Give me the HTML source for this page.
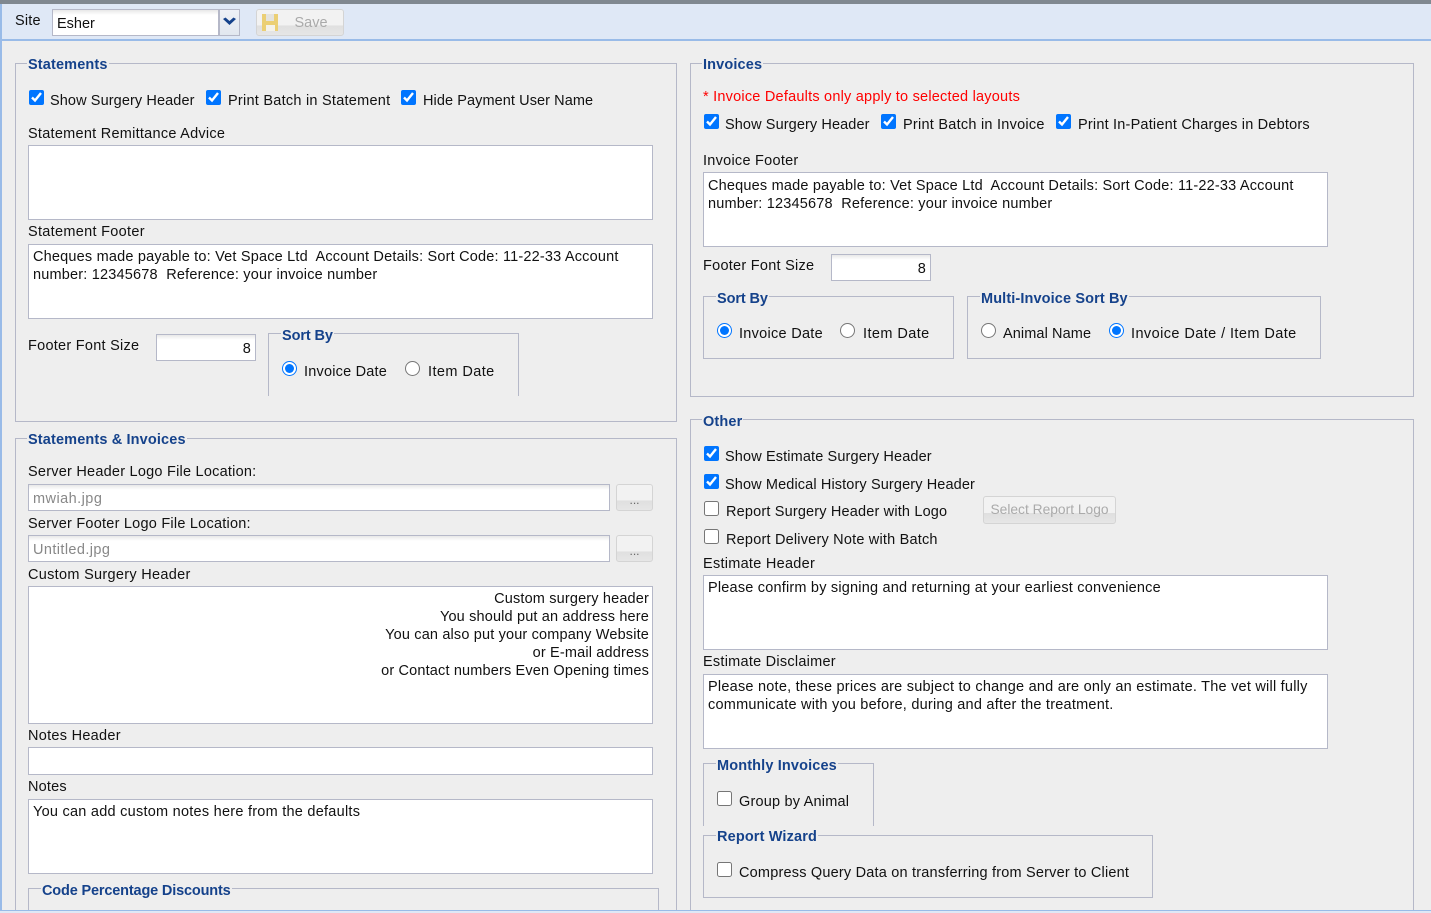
<!DOCTYPE html>
<html><head><meta charset="utf-8"><style>
html,body{margin:0;padding:0;width:1431px;height:913px;overflow:hidden;background:#eee}
#w{position:relative;width:1431px;height:913px;overflow:hidden;background:#eee;font-family:"Liberation Sans",sans-serif;font-size:14.5px;color:#111}
.a,.t,.l,.box,.ta,input,.btn{position:absolute;box-sizing:border-box}
.t{white-space:nowrap;line-height:18px;margin-top:1px;letter-spacing:.2px}
.l{white-space:nowrap;line-height:18px;margin-top:1px;font-weight:bold;color:#15428b;background:#eee;padding:0 1px;font-size:14.5px;letter-spacing:.14px}
.box{border:1px solid #b5b8c8}
.ta{background:#fff;border:1px solid #b5b8c8;padding:3px 4px 2px;line-height:18px;font-size:14.5px;overflow:hidden;letter-spacing:.23px}
.f{background:linear-gradient(#e8e8e8,#fff 5px,#fff)}
input[type=checkbox],input[type=radio]{margin:0;width:15px;height:15px}
.btn{border:1px solid #d4d4d4;border-radius:3px;background:linear-gradient(#f2f2f2,#f2f2f2 62%,#dfdfdf 62%,#e6e6e6);color:#aaa;text-align:center}
</style></head><body><div id="w">
<div class="a" style="left:0;top:0;width:1431px;height:4px;background:#808890"></div>
<div class="a" style="left:0;top:4px;width:1431px;height:37px;background:#dfe8f6;border-bottom:2px solid #99bbe8"></div>
<div class="a" style="left:0;top:4px;width:2px;height:909px;background:#99bbe8"></div>
<div class="t" style="left:15px;top:11px">Site</div>
<div class="a f" style="left:52px;top:9px;width:167px;height:27px;border:1px solid #b5b8c8;padding:5px 4px;line-height:18px;letter-spacing:0">Esher</div>
<div class="a" style="left:219px;top:9px;width:21px;height:27px;background:linear-gradient(#eef1f6,#e2e7ef);border:1px solid #b5b8c8;border-left:1px solid #b5b8c8"><svg width="19" height="25" style="display:block"><path d="M3 9l2.500-1.500L9.500 11 13.500 7.500 16 9l-6.500 6z" fill="#15428b"/></svg></div>
<div class="btn" style="left:256px;top:9px;width:88px;height:27px;line-height:27px;padding-left:22px">Save<svg width="18" height="18" style="position:absolute;left:4px;top:3px"><path d="M1 1h16v17H1z" fill="#ebcf74"/><path d="M5 1h8v7H5z" fill="#e4e3de"/><path d="M5 12h9v6H5z" fill="#f4f2ea"/></svg></div>

<div class="box" style="left:15px;top:63px;width:662px;height:359px"></div>
<div class="l" style="left:27px;top:55px">Statements</div>
<input type="checkbox" checked style="left:29px;top:90px"><div class="t" style="left:50px;top:91px;letter-spacing:.1px">Show Surgery Header</div>
<input type="checkbox" checked style="left:206px;top:90px"><div class="t" style="left:228px;top:91px;letter-spacing:.25px">Print Batch in Statement</div>
<input type="checkbox" checked style="left:401px;top:90px"><div class="t" style="left:423px;top:91px;letter-spacing:.08px">Hide Payment User Name</div>
<div class="t" style="left:28px;top:124px;letter-spacing:.26px">Statement Remittance Advice</div>
<div class="ta" style="left:28px;top:145px;width:625px;height:75px"></div>
<div class="t" style="left:28px;top:222px;letter-spacing:.3px">Statement Footer</div>
<div class="ta" style="left:28px;top:244px;width:625px;height:75px;letter-spacing:.19px">Cheques made payable to: Vet Space Ltd&nbsp; Account Details: Sort Code: 11-22-33 Account number: 12345678&nbsp; Reference: your invoice number</div>
<div class="t" style="left:28px;top:336px;letter-spacing:.26px">Footer Font Size</div>
<div class="ta f" style="left:156px;top:334px;width:100px;height:27px;text-align:right;padding-top:5px">8</div>
<div class="a" style="left:268px;top:333px;width:251px;height:63px;border:1px solid #b5b8c8;border-bottom:0"></div>
<div class="l" style="left:281px;top:326px;letter-spacing:-.1px">Sort By</div>
<input type="radio" checked style="left:282px;top:361px"><div class="t" style="left:304px;top:362px">Invoice Date</div>
<input type="radio" style="left:405px;top:361px"><div class="t" style="left:428px;top:362px;letter-spacing:.42px">Item Date</div>

<div class="box" style="left:15px;top:438px;width:662px;height:490px"></div>
<div class="l" style="left:27px;top:430px">Statements &amp; Invoices</div>
<div class="t" style="left:28px;top:462px;letter-spacing:.23px">Server Header Logo File Location:</div>
<div class="ta f" style="left:28px;top:484px;width:582px;height:27px;color:#888;padding-top:5px;letter-spacing:.45px">mwiah.jpg</div>
<div class="btn" style="left:616px;top:484px;width:37px;height:27px;line-height:30px;color:#666;font-size:12px">...</div>
<div class="t" style="left:28px;top:514px;letter-spacing:.23px">Server Footer Logo File Location:</div>
<div class="ta f" style="left:28px;top:535px;width:582px;height:27px;color:#888;padding-top:5px;letter-spacing:.4px">Untitled.jpg</div>
<div class="btn" style="left:616px;top:535px;width:37px;height:27px;line-height:30px;color:#666;font-size:12px">...</div>
<div class="t" style="left:28px;top:565px;letter-spacing:.3px">Custom Surgery Header</div>
<div class="ta" style="left:28px;top:586px;width:625px;height:138px;text-align:right;padding:3px 3px 2px 4px;letter-spacing:.16px">Custom surgery header<br>You should put an address here<br>You can also put your company Website<br>or E-mail address<br>or Contact numbers Even Opening times</div>
<div class="t" style="left:28px;top:726px;letter-spacing:.28px">Notes Header</div>
<div class="ta" style="left:28px;top:747px;width:625px;height:28px"></div>
<div class="t" style="left:28px;top:777px">Notes</div>
<div class="ta" style="left:28px;top:799px;width:625px;height:75px;letter-spacing:.25px">You can add custom notes here from the defaults</div>
<div class="box" style="left:28px;top:888px;width:631px;height:40px"></div>
<div class="l" style="left:41px;top:881px;letter-spacing:-.16px">Code Percentage Discounts</div>

<div class="box" style="left:690px;top:63px;width:724px;height:334px"></div>
<div class="l" style="left:702px;top:55px">Invoices</div>
<div class="t" style="left:703px;top:87px;color:#f00;letter-spacing:.22px">* Invoice Defaults only apply to selected layouts</div>
<input type="checkbox" checked style="left:704px;top:114px"><div class="t" style="left:725px;top:115px;letter-spacing:.1px">Show Surgery Header</div>
<input type="checkbox" checked style="left:881px;top:114px"><div class="t" style="left:903px;top:115px;letter-spacing:.25px">Print Batch in Invoice</div>
<input type="checkbox" checked style="left:1056px;top:114px"><div class="t" style="left:1078px;top:115px">Print In-Patient Charges in Debtors</div>
<div class="t" style="left:703px;top:151px;letter-spacing:.26px">Invoice Footer</div>
<div class="ta" style="left:703px;top:172px;width:625px;height:75px;padding-top:4px;letter-spacing:.19px">Cheques made payable to: Vet Space Ltd&nbsp; Account Details: Sort Code: 11-22-33 Account number: 12345678&nbsp; Reference: your invoice number</div>
<div class="t" style="left:703px;top:256px;letter-spacing:.26px">Footer Font Size</div>
<div class="ta f" style="left:831px;top:254px;width:100px;height:27px;text-align:right;padding-top:5px">8</div>
<div class="box" style="left:703px;top:296px;width:251px;height:63px"></div>
<div class="l" style="left:716px;top:289px;letter-spacing:-.1px">Sort By</div>
<input type="radio" checked style="left:717px;top:323px"><div class="t" style="left:739px;top:324px;letter-spacing:.28px">Invoice Date</div>
<input type="radio" style="left:840px;top:323px"><div class="t" style="left:863px;top:324px;letter-spacing:.42px">Item Date</div>
<div class="box" style="left:967px;top:296px;width:354px;height:63px"></div>
<div class="l" style="left:980px;top:289px;letter-spacing:.12px">Multi-Invoice Sort By</div>
<input type="radio" style="left:981px;top:323px"><div class="t" style="left:1003px;top:324px;letter-spacing:.1px">Animal Name</div>
<input type="radio" checked style="left:1109px;top:323px"><div class="t" style="left:1131px;top:324px;letter-spacing:.42px">Invoice Date / Item Date</div>

<div class="box" style="left:690px;top:419px;width:724px;height:510px"></div>
<div class="l" style="left:702px;top:412px">Other</div>
<input type="checkbox" checked style="left:704px;top:446px"><div class="t" style="left:725px;top:447px;letter-spacing:.13px">Show Estimate Surgery Header</div>
<input type="checkbox" checked style="left:704px;top:474px"><div class="t" style="left:725px;top:475px;letter-spacing:.12px">Show Medical History Surgery Header</div>
<input type="checkbox" style="left:704px;top:501px"><div class="t" style="left:726px;top:502px;letter-spacing:.17px">Report Surgery Header with Logo</div>
<div class="btn" style="left:983px;top:496px;width:133px;height:28px;line-height:25px;font-size:13.8px">Select Report Logo</div>
<input type="checkbox" style="left:704px;top:529px"><div class="t" style="left:726px;top:530px">Report Delivery Note with Batch</div>
<div class="t" style="left:703px;top:554px;letter-spacing:.27px">Estimate Header</div>
<div class="ta" style="left:703px;top:575px;width:625px;height:75px;letter-spacing:.2px">Please confirm by signing and returning at your earliest convenience</div>
<div class="t" style="left:703px;top:652px;letter-spacing:.25px">Estimate Disclaimer</div>
<div class="ta" style="left:703px;top:674px;width:625px;height:75px">Please note, these prices are subject to change and are only an estimate. The vet will fully communicate with you before, during and after the treatment.</div>
<div class="a" style="left:703px;top:763px;width:171px;height:63px;border:1px solid #b5b8c8;border-bottom:0"></div>
<div class="l" style="left:716px;top:756px">Monthly Invoices</div>
<input type="checkbox" style="left:717px;top:791px"><div class="t" style="left:739px;top:792px">Group by Animal</div>
<div class="box" style="left:703px;top:835px;width:450px;height:63px"></div>
<div class="l" style="left:716px;top:827px">Report Wizard</div>
<input type="checkbox" style="left:717px;top:862px"><div class="t" style="left:739px;top:863px">Compress Query Data on transferring from Server to Client</div>

<div class="a" style="left:0;top:910px;width:1431px;height:3px;background:#dfe8f6;border-top:1px solid #99bbe8"></div>
</div></body></html>
